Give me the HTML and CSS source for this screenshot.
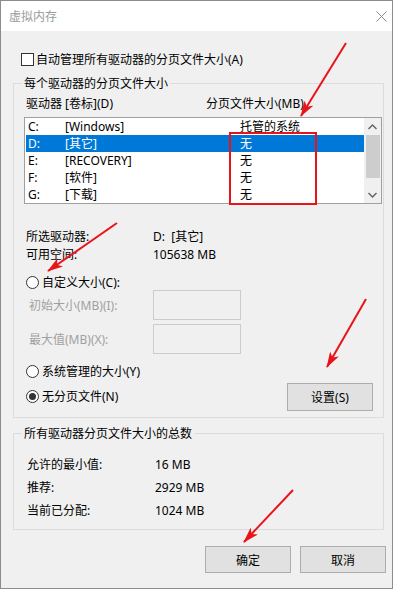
FILE: index.html
```html
<!DOCTYPE html>
<html lang="zh-CN">

<head>
  <meta charset="UTF-8" />
  <title>虚拟内存</title>
  <link rel="stylesheet" href="styles.css">
</head>

<body>
  <div class="window">
    <div class="titlebar">
      <span class="title">虚拟内存</span>
      <svg class="close" width="11" height="11" viewBox="0 0 11 11">
        <path d="M0.5 0.5 L10.5 10.5 M10.5 0.5 L0.5 10.5" stroke="#8a8a8a" stroke-width="1" fill="none" />
      </svg>
    </div>

    <div class="content">
      <div class="auto-row">
        <span class="checkbox"></span>
        <span>自动管理所有驱动器的分页文件大小(A)</span>
      </div>

      <fieldset class="group drives">
        <legend>每个驱动器的分页文件大小</legend>
        <div class="col-head">
          <span class="col-drive">驱动器 [卷标](D)</span>
          <span>分页文件大小(MB)</span>
        </div>

        <div class="listbox">
          <div class="rows">
            <div class="row"><span class="drv">C:</span><span class="lbl">[Windows]</span><span>托管的系统</span></div>
            <div class="row selected"><span class="drv">D:</span><span class="lbl">[其它]</span><span>无</span></div>
            <div class="row"><span class="drv">E:</span><span class="lbl">[RECOVERY]</span><span>无</span></div>
            <div class="row"><span class="drv">F:</span><span class="lbl">[软件]</span><span>无</span></div>
            <div class="row"><span class="drv">G:</span><span class="lbl">[下载]</span><span>无</span></div>
          </div>
          <div class="scrollbar">
            <div class="sb-btn">
              <svg width="9" height="6" viewBox="0 0 9 6"><path d="M0.5 5 L4.5 1 L8.5 5" stroke="#606060" stroke-width="1.4" fill="none" /></svg>
            </div>
            <div class="sb-track"><div class="sb-thumb"></div></div>
            <div class="sb-btn">
              <svg width="9" height="6" viewBox="0 0 9 6"><path d="M0.5 1 L4.5 5 L8.5 1" stroke="#606060" stroke-width="1.4" fill="none" /></svg>
            </div>
          </div>
        </div>

        <div class="info">
          <span>所选驱动器:</span><span>D:&nbsp;&nbsp;[其它]</span>
          <span>可用空间:</span><span>105638 MB</span>
        </div>

        <div class="radio-row custom">
          <span class="radio"></span>
          <span>自定义大小(C):</span>
        </div>

        <div class="size-grid">
          <span class="disabled">初始大小(MB)(I):</span><span class="field"></span>
          <span class="disabled">最大值(MB)(X):</span><span class="field"></span>
        </div>

        <div class="bottom-row">
          <div class="radio-col">
            <div class="radio-row"><span class="radio"></span><span>系统管理的大小(Y)</span></div>
            <div class="radio-row"><span class="radio checked"></span><span>无分页文件(N)</span></div>
          </div>
          <div class="button set-btn">设置(S)</div>
        </div>
      </fieldset>

      <fieldset class="group totals">
        <legend>所有驱动器分页文件大小的总数</legend>
        <div class="totals-grid">
          <span>允许的最小值:</span><span>16 MB</span>
          <span>推荐:</span><span>2929 MB</span>
          <span>当前已分配:</span><span>1024 MB</span>
        </div>
      </fieldset>

      <div class="buttons">
        <div class="button">确定</div>
        <div class="button">取消</div>
      </div>
    </div>
  </div>

  <!-- red markup drawn over the dialog -->
  <svg class="marks" width="396" height="589" viewBox="0 0 396 589">
    <defs>
      <marker id="head" viewBox="0 0 16 10" refX="15" refY="5" markerWidth="16" markerHeight="10"
        markerUnits="userSpaceOnUse" orient="auto">
        <path d="M0 0 L16 5 L0 10 L4 5 z" fill="#e8141a" />
      </marker>
    </defs>
    <rect x="230" y="133" width="86" height="71" fill="none" stroke="#e8141a" stroke-width="2" />
    <g stroke="#e8141a" stroke-width="2" fill="none" marker-end="url(#head)">
      <line x1="346" y1="43" x2="301" y2="116" />
      <line x1="117" y1="223" x2="48" y2="271" />
      <line x1="366" y1="299" x2="327" y2="367" />
      <line x1="293" y1="490" x2="244" y2="542" />
    </g>
  </svg>
</body>

</html>
```

FILE: styles.css
```css
* {
  box-sizing: border-box;
}

body {
  margin: 0;
  background: #fff;
  font-family: "Noto Sans", "Noto Sans CJK SC", sans-serif;
  font-size: 12px;
  color: #000;
}

.window {
  width: 393px;
  height: 589px;
  border: 1px solid #8c8c8c;
  background: #f0f0f0;
  display: flex;
  flex-direction: column;
}

.titlebar {
  height: 30px;
  background: #fff;
  display: flex;
  align-items: center;
  justify-content: space-between;
  padding: 0 5px 0 8px;
}

.title {
  color: #9a9a9a;
  line-height: 17px;
}

.auto-row {
  margin: 20px 0 0 20px;
  height: 17px;
  line-height: 17px;
  display: flex;
  align-items: center;
  gap: 2px;
}

.checkbox {
  width: 13px;
  height: 13px;
  border: 1px solid #333;
  background: #fff;
}

.group {
  width: 371px;
  margin: 7px 0 0 12px;
  border: 1px solid #dcdcdc;
  padding: 0 1px 6px 10px;
  min-width: 0;
}

.group legend {
  padding: 0 2px;
  margin-left: -2px;
  line-height: 17px;
}

.col-head {
  margin-top: 3px;
  height: 17px;
  line-height: 17px;
  display: flex;
  padding-left: 2px;
}

.col-drive {
  width: 180px;
}

.listbox {
  margin-top: 5px;
  height: 87px;
  border: 1px solid #a0a0a0;
  background: #fff;
  display: flex;
}

.rows {
  flex: 1;
  padding-left: 1px;
}

.row {
  height: 17px;
  line-height: 17px;
  display: flex;
  padding-left: 2px;
}

.row.selected {
  background: #0078d7;
  color: #fff;
}

.drv {
  width: 37px;
}

.lbl {
  width: 175px;
}

.scrollbar {
  width: 17px;
  background: #f0f0f0;
  display: flex;
  flex-direction: column;
}

.sb-btn {
  height: 17px;
  display: flex;
  align-items: center;
  justify-content: center;
}

.sb-track {
  flex: 1;
}

.sb-thumb {
  height: 43px;
  margin: 0 1px 0 2px;
  background: #cdcdcd;
}

.info {
  margin-top: 24px;
  display: grid;
  grid-template-columns: 127px auto;
  row-gap: 1px;
  padding-left: 2px;
  line-height: 17px;
}

.radio-row {
  height: 17px;
  line-height: 17px;
  display: flex;
  align-items: center;
  gap: 3px;
}

.radio-row.custom {
  margin-top: 11px;
  height: 16px;
  padding-left: 2px;
}

.radio {
  width: 13px;
  height: 13px;
  border: 1px solid #333;
  border-radius: 50%;
  background: #fff;
  display: flex;
  align-items: center;
  justify-content: center;
}

.radio.checked::after {
  content: "";
  width: 7px;
  height: 7px;
  border-radius: 50%;
  background: #333;
}

.size-grid {
  display: grid;
  grid-template-columns: 124px 88px;
  grid-auto-rows: 30px;
  row-gap: 4px;
  padding-left: 5px;
  align-items: center;
}

.disabled {
  color: #a0a0a0;
}

.field {
  height: 30px;
  border: 1px solid #cccccc;
  background: #f0f0f0;
}

.bottom-row {
  margin-top: 9px;
  display: flex;
  justify-content: space-between;
  align-items: flex-end;
}

.radio-col {
  display: flex;
  flex-direction: column;
  gap: 8px;
  padding: 0 0 6px 2px;
}

.button {
  width: 86px;
  height: 27px;
  border: 1px solid #adadad;
  background: #e1e1e1;
  display: flex;
  align-items: center;
  justify-content: center;
}

.set-btn {
  height: 28px;
  margin-right: 9px;
}

.totals {
  padding-bottom: 10px;
}

.totals-grid {
  padding: 14px 0 0 3px;
  display: grid;
  grid-template-columns: 128px auto;
  row-gap: 6px;
  line-height: 17px;
}

.buttons {
  margin-top: 16px;
  display: flex;
  justify-content: flex-end;
  gap: 9px;
  padding-right: 6px;
}

.marks {
  position: absolute;
  top: 0;
  left: 0;
  pointer-events: none;
}
```
